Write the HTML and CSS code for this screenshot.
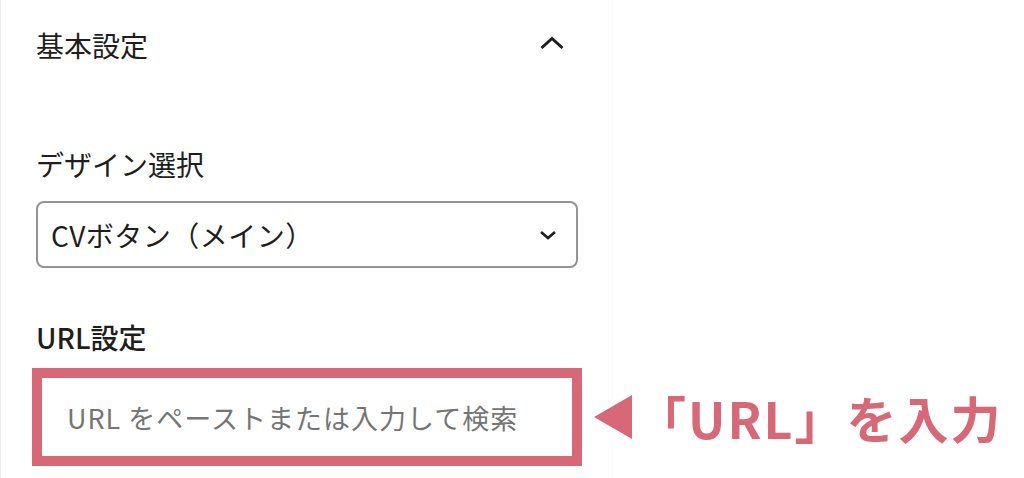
FILE: index.html
```html
<!DOCTYPE html>
<html lang="ja">
<head>
    <meta charset="UTF-8">
    <title>基本設定</title>
    <link rel="stylesheet" href="styles.css">
</head>
<body>
<div class="panel">
    <div class="panel-head">
        <h2 class="panel-title">基本設定</h2>
        <button class="toggle" type="button" aria-label="閉じる">
            <svg width="24" height="24" viewBox="0 0 24 24"><path d="M1.5 17 L12 7.5 L22.5 17" fill="none" stroke="#1e1e1e" stroke-width="3"/></svg>
        </button>
    </div>

    <label class="field-label">デザイン選択</label>
    <div class="select">
        <span>CVボタン（メイン）</span>
        <svg width="18" height="12" viewBox="0 0 18 12"><path d="M2 3 L9 9 L16 3" fill="none" stroke="#1e1e1e" stroke-width="2.6"/></svg>
    </div>

    <label class="field-label strong">URL設定</label>
    <div class="url-row">
        <div class="url-input">URL をペーストまたは入力して検索</div>
        <div class="note">
            <span class="arrow"></span>
            <span class="note-text">「URL」を入力</span>
        </div>
    </div>
</div>
</body>
</html>
```

FILE: styles.css
```css
* {
    margin: 0;
    padding: 0;
    box-sizing: border-box;
}
body {
    background: #fff;
    font-family: "Noto Sans CJK JP", "Noto Sans", sans-serif;
    color: #1e1e1e;
    height: 478px;
    overflow: hidden;
}
.panel {
    width: 613px;
    height: 478px;
    border-left: 1px solid #efefef;
    border-right: 1px solid #fbfbfb;
    padding: 0 35px;
}
.panel-head {
    height: 90px;
    display: flex;
    align-items: center;
    justify-content: space-between;
}
.panel-title {
    font-size: 28px;
    font-weight: normal;
    line-height: 40px;
}
.toggle {
    border: none;
    background: none;
    width: 24px;
    height: 24px;
    margin-right: 13px;
    margin-top: -4px;
}
.toggle svg {
    display: block;
}
.field-label {
    display: block;
    font-size: 28px;
    line-height: 40px;
    margin-top: 54px;
}
.field-label.strong {
    font-weight: 500;
    margin-top: 49px;
}
.select {
    margin-top: 17px;
    height: 67px;
    width: 542px;
    border: 2px solid #949494;
    border-radius: 8px;
    display: flex;
    align-items: center;
    justify-content: space-between;
    padding: 0 19px 0 13px;
    font-size: 28px;
    letter-spacing: 0.5px;
}
.select svg {
    display: block;
}
.url-row {
    margin-top: 11px;
    margin-left: -4px;
    display: flex;
    align-items: center;
    width: 1000px;
}
.url-input {
    width: 550px;
    height: 98px;
    border: 10px solid #d66878;
    padding-left: 25px;
    display: flex;
    align-items: center;
    font-size: 27px;
    letter-spacing: 1px;
    color: #757575;
}
.note {
    display: flex;
    align-items: center;
    margin-left: 12px;
    color: #d66878;
}
.arrow {
    width: 0;
    height: 0;
    border-top: 22px solid transparent;
    border-bottom: 22px solid transparent;
    border-right: 38px solid #d66878;
}
.note-text {
    font-size: 50px;
    font-weight: bold;
    letter-spacing: 2px;
    margin-left: 4px;
    line-height: 1;
}
```
